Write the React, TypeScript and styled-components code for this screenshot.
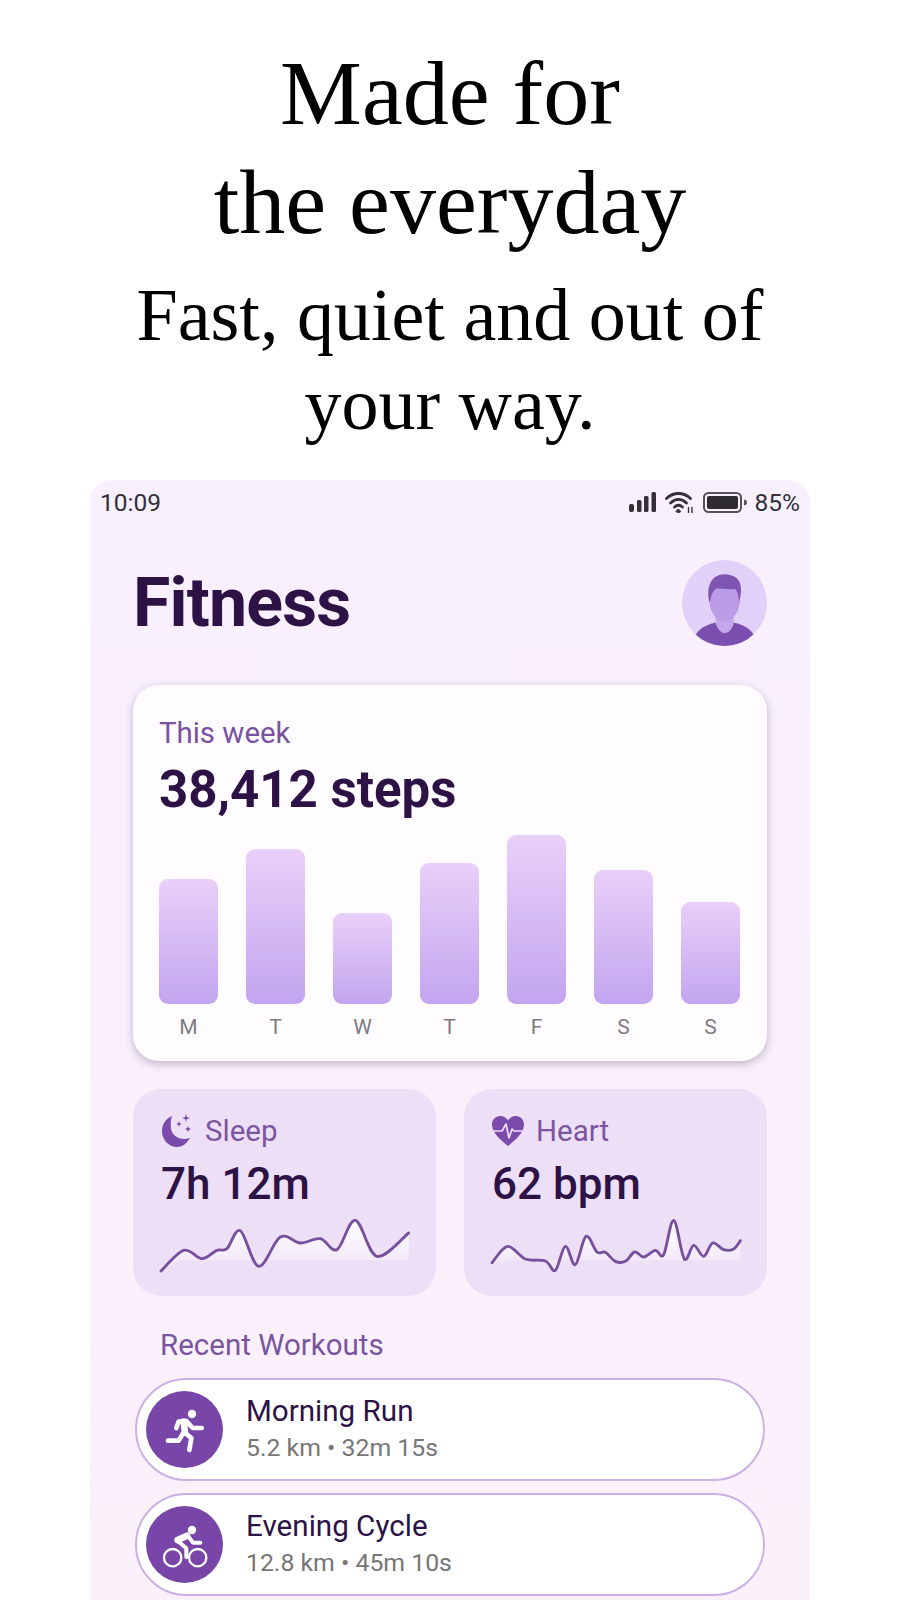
import React from "react";
import styled, { createGlobalStyle } from "styled-components";

const Global = createGlobalStyle`
  html, body { margin: 0; padding: 0; background: #fff; }
  body { height: 1600px; overflow: hidden; }
  * { box-sizing: border-box; }
`;

const Page = styled.div`
  width: 900px;
  height: 1600px;
  overflow: hidden;
  background: #fff;
  display: flex;
  flex-direction: column;
  align-items: center;
`;
const Headline = styled.h1`
  margin: 39px 0 0;
  font: 400 92px/109px "Liberation Serif", serif;
  color: #000;
  text-align: center;
`;
const Subhead = styled.h2`
  margin: 14px 0 0;
  font: 400 74px/89px "Liberation Serif", serif;
  color: #000;
  text-align: center;
`;
const Phone = styled.div`
  width: 720px;
  margin-top: 31px;
  flex: 1;
  border-radius: 22px 22px 0 0;
  background: linear-gradient(180deg, #f8f0fc 0%, #f9f0fc 50%, #fbf1fb 100%);
  font-family: Roboto, sans-serif;
  overflow: hidden;
`;
const StatusBar = styled.div`
  height: 44px;
  padding: 0 10px;
  display: flex;
  align-items: center;
  justify-content: space-between;
  color: #333038;
  font-size: 24.5px;
`;
const StatusIcons = styled.div`
  display: flex;
  align-items: center;
  gap: 8px;
`;
const Content = styled.div`
  padding: 0 43px;
`;
const Header = styled.div`
  margin-top: 36px;
  height: 86px;
  display: flex;
  align-items: center;
  justify-content: space-between;
`;
const Title = styled.div`
  font-size: 68px;
  font-weight: 700;
  letter-spacing: -0.8px;
  color: #2d1245;
`;
const Avatar = styled.svg`
  width: 85px;
  height: 86px;
  display: block;
`;
const WeekCard = styled.section`
  margin-top: 39px;
  height: 376px;
  padding: 31px 26px 22px;
  border-radius: 26px;
  background: #fefcff;
  box-shadow: 0 3px 9px rgba(70, 50, 90, 0.32);
`;
const Caption = styled.div`
  font-size: 29.4px;
  line-height: 34px;
  color: #7a519f;
`;
const Steps = styled.div`
  margin-top: 10px;
  font-size: 51px;
  line-height: 60px;
  font-weight: 700;
  color: #2d1245;
`;
const Chart = styled.div`
  display: grid;
  grid-template-columns: repeat(7, 59px);
  gap: 28px;
`;
const Column = styled.div`
  display: flex;
  flex-direction: column;
  justify-content: flex-end;
  height: 219px;
`;
const Bar = styled.div<{ $h: number }>`
  height: ${(p) => p.$h}px;
  border-radius: 9px;
  background: linear-gradient(180deg, #e8d0f8 0%, #c2a5ef 100%);
`;
const Day = styled.div`
  margin-top: 11px;
  font-size: 21px;
  line-height: 24px;
  text-align: center;
  color: #7d7d7f;
`;
const StatRow = styled.div`
  margin-top: 28px;
  display: grid;
  grid-template-columns: repeat(2, minmax(0, 1fr));
  gap: 28px;
`;
const StatCard = styled.section`
  height: 207px;
  padding: 25px 28px 0;
  border-radius: 28px;
  background: #ecdff6;
`;
const StatLabel = styled.div`
  height: 34px;
  display: flex;
  align-items: center;
  gap: 12px;
  font-size: 29.5px;
  color: #7c559f;
`;
const StatValue = styled.div`
  margin-top: 11px;
  font-size: 44px;
  line-height: 50px;
  font-weight: 500;
  color: #2d1245;
`;
const Spark = styled.svg`
  display: block;
  margin-top: 9px;
  width: 249px;
  height: 55px;
  overflow: visible;
`;
const SectionTitle = styled.div`
  margin-top: 31px;
  padding-left: 27px;
  font-size: 29.5px;
  line-height: 36px;
  color: #7a559f;
`;
const Rows = styled.div`
  margin: 15px 2px 0;
  display: flex;
  flex-direction: column;
  gap: 12px;
`;
const Row = styled.div`
  height: 103px;
  flex: none;
  padding-left: 9px;
  display: flex;
  align-items: center;
  gap: 23px;
  background: #fff;
  border: 2px solid #cbb0e6;
  border-radius: 52px;
`;
const RowIcon = styled.div`
  width: 77px;
  height: 77px;
  flex: none;
  border-radius: 50%;
  background: #7746a8;
  color: #fff;
  display: flex;
  align-items: center;
  justify-content: center;
`;
const RowText = styled.div`
  display: flex;
  flex-direction: column;
`;
const RowTitle = styled.div`
  font-size: 29.6px;
  line-height: 36px;
  color: #2d1245;
`;
const RowSub = styled.div`
  font-size: 24.8px;
  line-height: 38px;
  color: #767676;
`;

const smooth = (pts: number[][]) => {
  let d = `M${pts[0][0]} ${pts[0][1]}`;
  for (let i = 0; i < pts.length - 1; i++) {
    const p0 = pts[i - 1] || pts[i];
    const p1 = pts[i];
    const p2 = pts[i + 1];
    const p3 = pts[i + 2] || p2;
    const t = 0.17;
    d += ` C${p1[0] + (p2[0] - p0[0]) * t} ${p1[1] + (p2[1] - p0[1]) * t} ${p2[0] - (p3[0] - p1[0]) * t} ${p2[1] - (p3[1] - p1[1]) * t} ${p2[0]} ${p2[1]}`;
  }
  return d;
};

const sleepPts = [[122,574],[190,512],[245,537],[290,512],[320,507],[360,453],[415,560],[480,472],[540,490],[600,477],[650,510],[705,422],[770,530],[865,460]];
const heartPts = [[110,549],[157,500],[210,538],[270,544],[300,572],[330,500],[360,555],[392,470],[425,517],[450,518],[480,545],[510,545],[538,517],[565,532],[600,512],[625,525],[655,422],[687,538],[715,497],[745,530],[772,490],[805,510],[835,508],[855,483]];

const Sparkline = ({ pts, id }: { pts: number[][]; id: string }) => {
  const x0 = pts[0][0];
  const x1 = pts[pts.length - 1][0];
  const d = smooth(pts);
  return (
    <Spark viewBox={`${x0} 415 747 165`} preserveAspectRatio="none">
      <defs>
        <linearGradient id={id} x1="0" y1="0" x2="0" y2="1">
          <stop offset="0" stopColor="#fff" stopOpacity="1" />
          <stop offset="1" stopColor="#fff" stopOpacity="0.15" />
        </linearGradient>
      </defs>
      <path d={`${d} L${x1} 542 L${x0 + 60} 542 Z`} fill={`url(#${id})`} />
      <path d={d} fill="none" stroke="#76509c" strokeWidth="8.5" strokeLinecap="round" strokeLinejoin="round" />
    </Spark>
  );
};

const Signal = () => (
  <svg width="28" height="20" viewBox="0 0 28 20">
    <rect x="0" y="12" width="5" height="8" rx="2" fill="#333038" />
    <rect x="8" y="8" width="4.5" height="12" rx="1.5" fill="#333038" />
    <rect x="15" y="4" width="4.5" height="16" rx="1.5" fill="#333038" />
    <rect x="22.5" y="0" width="4.5" height="20" rx="1.5" fill="#333038" />
  </svg>
);
const Wifi = () => (
  <svg width="30" height="22" viewBox="0 0 30 22" fill="none" stroke="#333038" strokeWidth="2.8" strokeLinecap="round">
    <path d="M1.5 7.5C8.5 0.8 18.5 0.8 25.5 7.5" />
    <path d="M5.5 12C10.5 7.3 16.5 7.3 21.5 12" />
    <path d="M9.5 16C12 13.8 15 13.8 17.5 16" />
    <path d="M13.5 18.2l2.4 2.4-2.4 1.2-2.4-1.2z" fill="#333038" strokeWidth="1" />
    <path d="M23.5 16.5v5M27 16.5v5" strokeWidth="1.4" />
  </svg>
);
const Battery = () => (
  <svg width="44" height="21" viewBox="0 0 44 21">
    <rect x="1" y="1" width="37" height="19" rx="4.5" fill="none" stroke="#55525a" strokeWidth="2" />
    <rect x="4" y="4" width="31" height="13" rx="2" fill="#2e2c30" />
    <path d="M41 7.5c2 .4 3 1.5 3 3s-1 2.6-3 3z" fill="#55525a" />
  </svg>
);
const Moon = () => (
  <svg width="32" height="34" viewBox="0 0 32 34" fill="#7b4bab">
    <path d="M11 2C3.5 5 1 12 1 17c0 9 7 16 15 16 6 0 10-4 13-9-9 3-17-1-19-9-.5-5-.5-9 1-13z" />
    <path d="M25 0l.9 3.1 3.100.9-3.100.9-.9 3.100-.9-3.100-3.100-.9 3.100-.9zM18 7l.8 2.200 2.200.8-2.200.8-.8 2.200-.8-2.200-2.200-.8 2.200-.8zM27 12l.9 2.100 2.100.9-2.100.9-.9 2.100-.9-2.100-2.100-.9 2.100-.9z" />
  </svg>
);
const HeartPulse = () => (
  <svg width="32" height="32" viewBox="0 0 32 32">
    <path d="M16 31C11 26.5 0 19 0 9.5 0 4.5 3.8 1 8.3 1 11.5 1 14.5 2.8 16 5.5 17.5 2.8 20.5 1 23.7 1 28.2 1 32 4.5 32 9.5 32 19 21 26.5 16 31z" fill="#7b4bab" />
    <path d="M1 16H10L14 9 17 23 20 14 22 16H31" fill="none" stroke="#ecdff6" strokeWidth="1.7" strokeLinejoin="round" />
  </svg>
);
const RunIcon = () => (
  <svg width="76" height="76" viewBox="18 14 228 228" fill="none" stroke="#fff" strokeWidth="14" strokeLinecap="round" strokeLinejoin="round">
    <circle cx="153" cy="80" r="12.5" fill="#fff" stroke="none" />
    <path d="M106 122l7-19 24-2" />
    <path d="M128 103l4 32" strokeWidth="20" />
    <path d="M140 106l15 16h27" />
    <path d="M131 136l20 16-6 36" />
    <path d="M125 140l-12 20H81" />
  </svg>
);
const BikeIcon = () => (
  <svg width="76" height="76" viewBox="18 14 228 228" fill="none" stroke="#fff" strokeWidth="12" strokeLinecap="round" strokeLinejoin="round">
    <circle cx="153" cy="83" r="12.5" fill="#fff" stroke="none" />
    <circle cx="95" cy="166" r="26" strokeWidth="7" />
    <circle cx="170" cy="166" r="26" strokeWidth="7" />
    <path d="M110 113l28-13" strokeWidth="20" />
    <path d="M142 102l14 19h22" />
    <path d="M113 118l23 20v26" />
  </svg>
);

const bars = [
  ["M", 125],
  ["T", 155],
  ["W", 91],
  ["T", 141],
  ["F", 169],
  ["S", 134],
  ["S", 102],
] as const;

export default function App() {
  return (
    <Page>
      <Global />
      <Headline>
        Made for
        <br />
        the everyday
      </Headline>
      <Subhead>
        Fast, quiet and out of
        <br />
        your way.
      </Subhead>
      <Phone>
        <StatusBar>
          <span>10:09</span>
          <StatusIcons>
            <Signal />
            <Wifi />
            <Battery />
            <span>85%</span>
          </StatusIcons>
        </StatusBar>
        <Content>
          <Header>
            <Title>Fitness</Title>
            <Avatar viewBox="15 15 255 258">
              <defs>
                <clipPath id="av">
                  <ellipse cx="142.5" cy="144" rx="127.5" ry="129" />
                </clipPath>
              </defs>
              <ellipse cx="142.5" cy="144" rx="127.5" ry="129" fill="#e1d1f9" />
              <g clipPath="url(#av)">
                <path d="M46 280c0-48 30-68 72-78h50c42 10 72 30 72 78z" fill="#7b4fb0" />
                <path d="M116 170h54v36c-6 20-18 28-27 28s-21-10-27-28z" fill="#c4a7ea" />
                <path d="M96 125c0-22 20-32 46-32s48 10 48 34c0 38-20 72-48 72s-46-34-46-74z" fill="#ba9ce6" />
                <path d="M98 142c-10-32-4-84 46-84 20 0 48 10 48 44 0 14-2 26-6 38-1-16-4-32-12-38-16 2-40 0-56-2-12 8-16 26-20 42z" fill="#7e55b0" />
              </g>
            </Avatar>
          </Header>
          <WeekCard>
            <Caption>This week</Caption>
            <Steps>38,412 steps</Steps>
            <Chart>
              {bars.map(([d, h], i) => (
                <Column key={i}>
                  <Bar $h={h} />
                  <Day>{d}</Day>
                </Column>
              ))}
            </Chart>
          </WeekCard>
          <StatRow>
            <StatCard>
              <StatLabel>
                <Moon />
                Sleep
              </StatLabel>
              <StatValue>7h 12m</StatValue>
              <Sparkline pts={sleepPts} id="g1" />
            </StatCard>
            <StatCard>
              <StatLabel>
                <HeartPulse />
                Heart
              </StatLabel>
              <StatValue>62 bpm</StatValue>
              <Sparkline pts={heartPts} id="g2" />
            </StatCard>
          </StatRow>
          <SectionTitle>Recent Workouts</SectionTitle>
          <Rows>
            <Row>
              <RowIcon>
                <RunIcon />
              </RowIcon>
              <RowText>
                <RowTitle>Morning Run</RowTitle>
                <RowSub>5.2 km • 32m 15s</RowSub>
              </RowText>
            </Row>
            <Row>
              <RowIcon>
                <BikeIcon />
              </RowIcon>
              <RowText>
                <RowTitle>Evening Cycle</RowTitle>
                <RowSub>12.8 km • 45m 10s</RowSub>
              </RowText>
            </Row>
          </Rows>
        </Content>
      </Phone>
    </Page>
  );
}
